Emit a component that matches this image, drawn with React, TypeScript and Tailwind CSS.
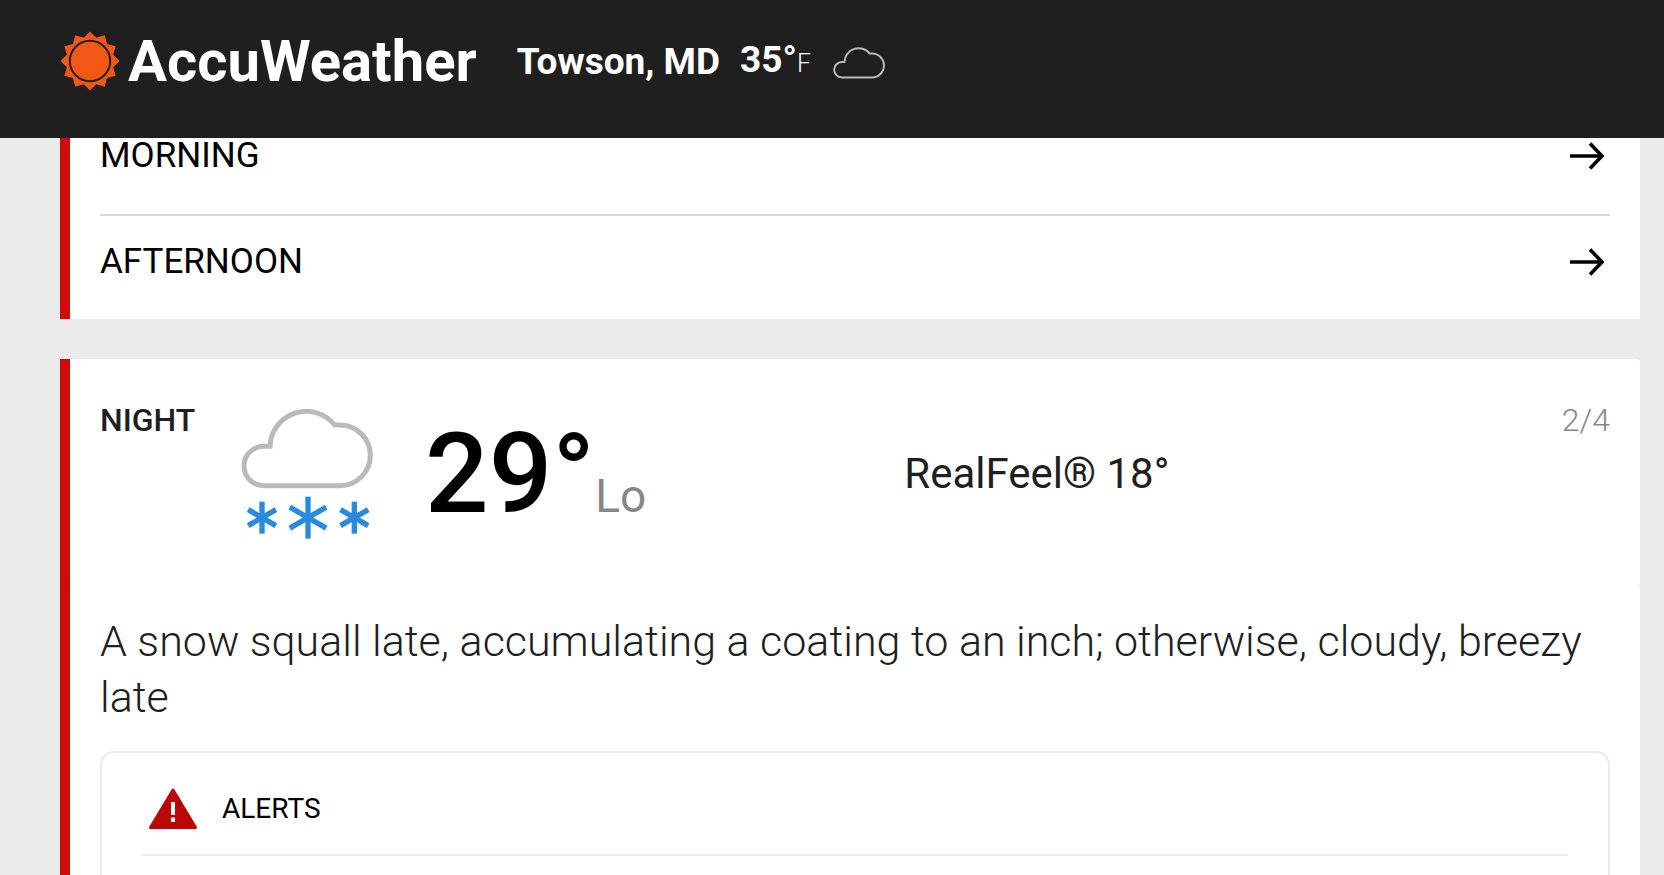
import React from "react";

interface CloudProps {
  className: string;
  strokeWidth: number;
  snow?: boolean;
}

const FLAKES = [
  { x: 547, r: 48 },
  { x: 685, r: 63 },
  { x: 824, r: 48 },
];

const Cloud: React.FC<CloudProps> = ({ className, strokeWidth, snow = false }) => (
  <svg
    className={className}
    viewBox={snow ? "484 86 396 388" : "484 86 396 238"}
    fill="none"
    aria-hidden="true"
  >
    <path
      d="M552 315A59 59 0 0 1 552 197H571A109 109 0 0 1 765 133H781A91 91 0 0 1 781 315Z"
      stroke="#bababa"
      strokeWidth={strokeWidth}
    />
    {snow &&
      FLAKES.map(({ x, r }) => (
        <g key={x} stroke="#288bdd" strokeWidth="16">
          <path d={`M${x} ${411 - r}V${411 + r}`} />
          <path d={`M${x} ${411 - r}V${411 + r}`} transform={`rotate(60 ${x} 411)`} />
          <path d={`M${x} ${411 - r}V${411 + r}`} transform={`rotate(-60 ${x} 411)`} />
        </g>
      ))}
  </svg>
);

const SUN_POINTS = Array.from({ length: 24 }, (_, i) => {
  const radius = i % 2 === 0 ? 29.6 : 24;
  const angle = (i * Math.PI) / 12;
  return `${30 + radius * Math.sin(angle)},${30 - radius * Math.cos(angle)}`;
}).join(" ");

const SunLogo: React.FC = () => (
  <svg className="h-[60px] w-[60px]" viewBox="0 0 60 60" aria-hidden="true">
    <polygon points={SUN_POINTS} fill="#f25716" />
    <circle cx="30" cy="30" r="20.2" fill="none" stroke="#1f1f1f" strokeWidth="2" />
  </svg>
);

const Arrow: React.FC = () => (
  <svg
    className="mr-1.5 h-7 w-[34px]"
    viewBox="0 0 34 28"
    fill="none"
    stroke="#000"
    strokeWidth="3.6"
    aria-hidden="true"
  >
    <path d="M0 14H32M20 1.500L32 14L20 26.500" />
  </svg>
);

const AlertIcon: React.FC = () => (
  <svg className="h-[42px] w-[50px]" viewBox="0 0 50 42" aria-hidden="true">
    <path
      d="M25 2L47.500 39.500H2.500Z"
      fill="#ba0606"
      stroke="#ba0606"
      strokeWidth="3"
      strokeLinejoin="round"
    />
    <path d="M25 14V27M25 29.500V34" stroke="#fff" strokeWidth="4" />
  </svg>
);

const Header: React.FC = () => (
  <header className="flex h-[138px] shrink-0 items-start bg-[#1f1f1f] pl-[60px] pt-[31px] text-white">
    <a href="#home" className="flex items-center gap-2">
      <SunLogo />
      <span className="text-[58px] font-bold leading-[60px]">AccuWeather</span>
    </a>
    <a href="#current" className="ml-10 flex items-center leading-[58px]">
      <h1 className="text-[37px] font-bold">Towson, MD</h1>
      <p className="ml-5 text-[37px] font-bold">
        35°<span className="text-[25px] font-light">F</span>
      </p>
      <Cloud className="ml-[22px] mt-0.5 h-8 w-[52px]" strokeWidth={15} />
    </a>
  </header>
);

const App: React.FC = () => (
  <div className="flex min-h-screen flex-col bg-[#ebebeb] font-[Roboto,sans-serif] text-[#1f1f1f]">
    <Header />
    <main className="ml-[60px] mr-6 flex flex-1 flex-col gap-10">
      <section className="border-l-[10px] border-[#cf0a0a] bg-white px-[30px] text-[35px] leading-9 text-black">
        <a
          href="#morning"
          className="flex items-center justify-between border-b-2 border-[#d8d8d8] pb-10"
        >
          MORNING
          <Arrow />
        </a>
        <a href="#afternoon" className="flex items-center justify-between pb-[39px] pt-7">
          AFTERNOON
          <Arrow />
        </a>
      </section>

      <section className="flex flex-1 flex-col border-l-[10px] border-[#cf0a0a]">
        <div className="flex h-[228px] items-start rounded bg-white px-[30px] pt-10">
          <div className="flex w-[53%] items-start">
            <h2 className="w-[141px] text-[32px] font-medium leading-[42px]">NIGHT</h2>
            <Cloud className="mt-2.5 h-[130px] w-[132px]" strokeWidth={15} snow />
            <p className="ml-[52px] text-[112px] font-medium leading-[150px] text-black">
              29°
              <span className="text-[46px] font-normal text-[#878787]">Lo</span>
            </p>
          </div>
          <p className="ml-1 pt-[50px] text-[42px] leading-[50px]">RealFeel® 18°</p>
          <p className="ml-auto text-[32px] font-light leading-[42px] text-[#878787]">2/4</p>
        </div>

        <div className="flex flex-1 flex-col bg-white px-[30px] pt-[26px]">
          <p className="text-[43px] font-light leading-[56px]">
            A snow squall late, accumulating a coating to an inch; otherwise, cloudy, breezy late
          </p>
          <section className="mt-[26px] flex-1 rounded-t-[14px] border-2 border-b-0 border-[#ebebeb] px-10">
            <div className="flex items-center gap-6 border-b-2 border-[#ebebeb] pb-6 pl-1.5 pt-[35px]">
              <AlertIcon />
              <h3 className="text-[28px] leading-[42px] text-black">ALERTS</h3>
            </div>
          </section>
        </div>
      </section>
    </main>
  </div>
);

export default App;
